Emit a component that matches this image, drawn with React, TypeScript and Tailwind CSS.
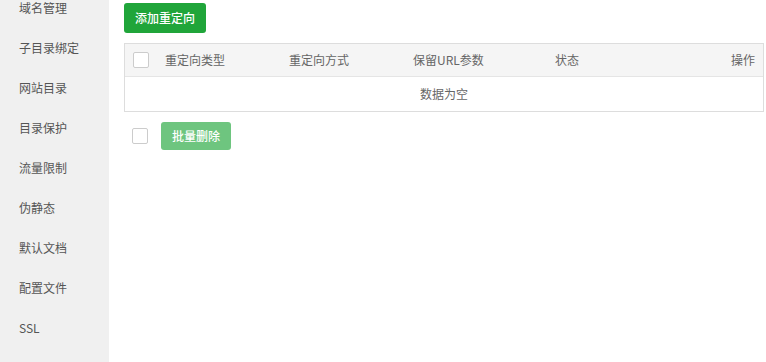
import React from "react";

const menu = [
  "域名管理",
  "子目录绑定",
  "网站目录",
  "目录保护",
  "流量限制",
  "伪静态",
  "默认文档",
  "配置文件",
  "SSL",
];

const columns = ["重定向类型", "重定向方式", "保留URL参数", "状态"];

const Box = () => (
  <span className="block w-4 h-4 border border-[#ccc] rounded-[2px] bg-white" />
);

const App: React.FC = () => {
  return (
    <div
      className="flex w-[766px] h-[362px] overflow-hidden bg-white text-[12px] text-[#666]"
      style={{ fontFamily: '"Noto Sans CJK SC", "Noto Sans", sans-serif' }}
    >
      <div className="w-[109px] shrink-0 bg-[#f0f0f0]">
        <ul className="-mt-[12px]">
          {menu.map((item) => (
            <li key={item} className="h-10 flex items-center pl-[19px] text-[#555]">
              {item}
            </li>
          ))}
        </ul>
      </div>

      <div className="flex-1 pl-[15px] pt-[3px]">
        <button className="h-[30px] w-[82px] rounded-[3px] bg-[#20a53a] text-white font-medium">
          添加重定向
        </button>

        <div className="mt-[10px] w-[640px] border border-[#ddd]">
          <div className="grid grid-cols-[31px_124px_124px_142px_1fr_80px] h-[33px] items-center bg-[#f5f5f5] border-b border-[#e5e5e5]">
            <div className="pl-[8px]">
              <Box />
            </div>
            {columns.map((col) => (
              <div key={col} className="pl-[9px]">
                {col}
              </div>
            ))}
            <div className="pr-[8px] text-right">操作</div>
          </div>
          <div className="h-[34px] flex items-center justify-center">数据为空</div>
        </div>

        <div className="mt-[10px] flex items-center">
          <div className="pl-[8px] pr-[13px]">
            <Box />
          </div>
          <button className="h-[28px] w-[70px] rounded-[3px] bg-[#6ec57f] text-white font-medium">
            批量删除
          </button>
        </div>
      </div>
    </div>
  );
};

export default App;
